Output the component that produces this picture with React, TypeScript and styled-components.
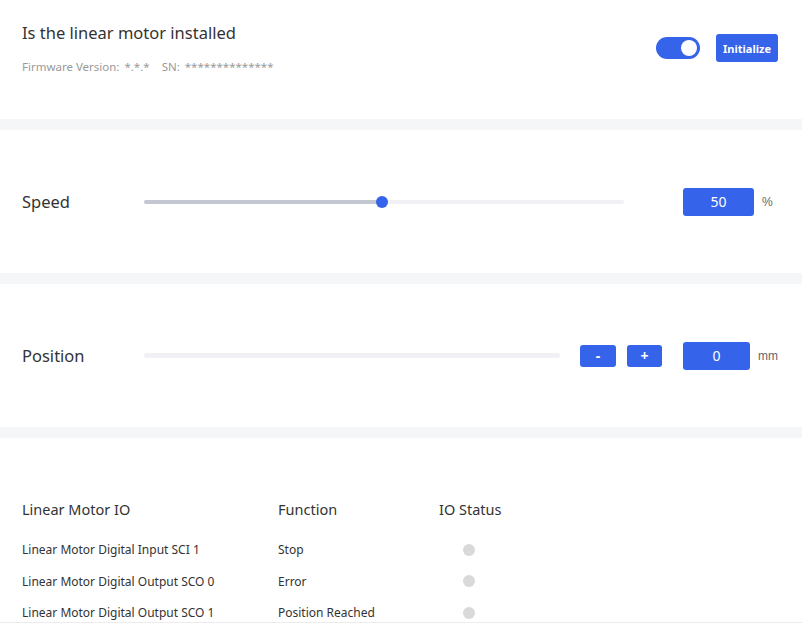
import { createGlobalStyle } from 'styled-components';
import styled from 'styled-components';

const GlobalStyle = createGlobalStyle`
    body {
        margin: 0;
        background: #fff;
        font-family: 'Noto Sans', 'Open Sans', sans-serif;
        color: #333;
    }
`;

const BLUE = '#3563e9';

const Page = styled.div`
    width: 802px;
    display: flex;
    flex-direction: column;
`;

const Band = styled.div`
    height: 11px;
    background-color: #f5f6f8;
`;

const Header = styled.div`
    height: 119px;
    display: flex;
    justify-content: space-between;
    align-items: center;
    padding: 0 24px 23px 22px;
    box-sizing: border-box;
`;

const HeaderText = styled.div`
    display: flex;
    flex-direction: column;
    gap: 15px;
`;

const Title = styled.div`
    font-size: 16.5px;
    line-height: 22px;
    color: #333;
`;

const Meta = styled.div`
    font-size: 11.5px;
    line-height: 16px;
    color: #9a9a9a;
    display: flex;
    gap: 12px;
`;

const MetaValue = styled.span`
    margin-left: 5px;
`;

const Actions = styled.div`
    display: flex;
    align-items: center;
    gap: 16px;
`;

const Toggle = styled.div<{ $on: boolean }>`
    width: 44px;
    height: 22px;
    border-radius: 11px;
    background-color: ${(p) => (p.$on ? BLUE : '#ccc')};
    position: relative;

    &::after {
        content: '';
        position: absolute;
        top: 3px;
        left: ${(p) => (p.$on ? '25px' : '3px')};
        width: 16px;
        height: 16px;
        border-radius: 50%;
        background: #fff;
    }
`;

const Button = styled.button<{ $w: number; $h: number; $size?: number }>`
    width: ${(p) => p.$w}px;
    height: ${(p) => p.$h}px;
    border: none;
    border-radius: 3px;
    background-color: ${BLUE};
    color: #fff;
    font-family: 'Noto Sans', sans-serif;
    font-size: ${(p) => p.$size ?? 11}px;
    font-weight: 700;
    padding: 0;
    display: flex;
    align-items: center;
    justify-content: center;
`;

const ControlSection = styled.div`
    height: 143px;
    display: flex;
    align-items: center;
    padding-left: 22px;
    box-sizing: border-box;
`;

const Label = styled.div`
    width: 122px;
    font-size: 16.5px;
    line-height: 22px;
    color: #333;
`;

const Track = styled.div<{ $w: number; $h: number }>`
    width: ${(p) => p.$w}px;
    height: ${(p) => p.$h}px;
    border-radius: 3px;
    background-color: #f0f0f5;
    position: relative;
`;

const Fill = styled.div`
    height: 100%;
    border-radius: 3px;
    background-color: #c3c7d2;
    position: relative;

    &::after {
        content: '';
        position: absolute;
        right: -6px;
        top: 50%;
        margin-top: -6px;
        width: 12px;
        height: 12px;
        border-radius: 50%;
        background-color: ${BLUE};
    }
`;

const ValueBox = styled.div<{ $w: number; $ml: number }>`
    width: ${(p) => p.$w}px;
    height: 28px;
    margin-left: ${(p) => p.$ml}px;
    border-radius: 3px;
    background-color: ${BLUE};
    color: #fff;
    font-size: 14px;
    display: flex;
    align-items: center;
    justify-content: center;
`;

const Unit = styled.div`
    margin-left: 8px;
    font-size: 12px;
    color: #666;
    font-family: 'Liberation Sans', Arial, sans-serif;
`;

const StepButtons = styled.div`
    display: flex;
    gap: 11px;
    margin-left: 20px;
`;

const IoSection = styled.div`
    height: 185px;
    box-sizing: border-box;
    padding: 61px 0 0 22px;
    border-bottom: 1px solid #ececec;
    overflow: hidden;
`;

const IoRow = styled.div<{ $head?: boolean }>`
    display: grid;
    grid-template-columns: 256px 161px 100px;
    align-items: center;
    white-space: nowrap;
    height: ${(p) => (p.$head ? '20px' : '31.5px')};
    margin-bottom: ${(p) => (p.$head ? '15px' : '0')};
    font-size: ${(p) => (p.$head ? '14.5px' : '12px')};
    color: #333;
`;

const Dot = styled.div`
    width: 12px;
    height: 12px;
    border-radius: 50%;
    background-color: #d9d9d9;
    margin-left: 24px;
`;

const ioRows = [
    { io: 'Linear Motor Digital Input SCI 1', fn: 'Stop' },
    { io: 'Linear Motor Digital Output SCO 0', fn: 'Error' },
    { io: 'Linear Motor Digital Output SCO 1', fn: 'Position Reached' },
];

const App = () => {
    const speed = 50;

    return (
        <Page>
            <GlobalStyle />
            <Header>
                <HeaderText>
                    <Title>Is the linear motor installed</Title>
                    <Meta>
                        <span>
                            Firmware Version:<MetaValue>*.*.*</MetaValue>
                        </span>
                        <span>
                            SN:<MetaValue>**************</MetaValue>
                        </span>
                    </Meta>
                </HeaderText>
                <Actions>
                    <Toggle $on />
                    <Button $w={62} $h={28}>Initialize</Button>
                </Actions>
            </Header>
            <Band />
            <ControlSection>
                <Label>Speed</Label>
                <Track $w={480} $h={4}>
                    <Fill style={{ width: `${(speed / 100) * 99}%` }} />
                </Track>
                <ValueBox $w={71} $ml={59}>{speed}</ValueBox>
                <Unit>%</Unit>
            </ControlSection>
            <Band />
            <ControlSection>
                <Label>Position</Label>
                <Track $w={416} $h={5} />
                <StepButtons>
                    <Button $w={36} $h={22} $size={14}>-</Button>
                    <Button $w={35} $h={22} $size={14}>+</Button>
                </StepButtons>
                <ValueBox $w={67} $ml={21}>0</ValueBox>
                <Unit>mm</Unit>
            </ControlSection>
            <Band />
            <IoSection>
                <IoRow $head>
                    <span>Linear Motor IO</span>
                    <span>Function</span>
                    <span>IO Status</span>
                </IoRow>
                {ioRows.map((r) => (
                    <IoRow key={r.io}>
                        <span>{r.io}</span>
                        <span>{r.fn}</span>
                        <Dot />
                    </IoRow>
                ))}
            </IoSection>
        </Page>
    );
};

export default App;
